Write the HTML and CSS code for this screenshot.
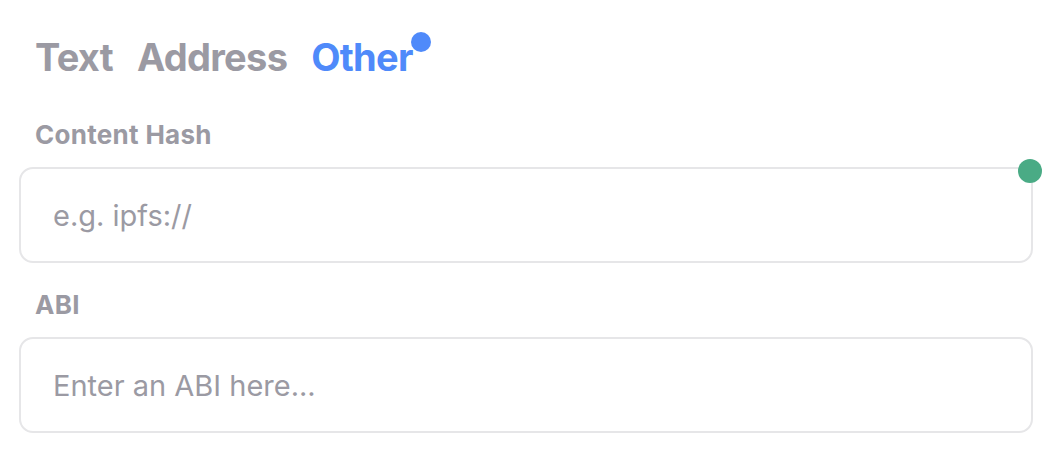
FILE: index.html
```html
<!DOCTYPE html>
<html lang="en">
<head>
    <meta charset="UTF-8">
    <title>Records</title>
    <link rel="stylesheet" href="styles.css">
</head>
<body>
    <div class="panel">
        <div class="tabs">
            <span class="tab">Text</span>
            <span class="tab">Address</span>
            <span class="tab tab-active">Other<span class="tab-dot"></span></span>
        </div>
        <div class="field">
            <label class="field-label">Content Hash</label>
            <div class="input-wrap">
                <input class="input" type="text" placeholder="e.g. ipfs://">
                <span class="status-dot"></span>
            </div>
        </div>
        <div class="field">
            <label class="field-label">ABI</label>
            <div class="input-wrap">
                <input class="input" type="text" placeholder="Enter an ABI here...">
            </div>
        </div>
    </div>
</body>
</html>
```

FILE: styles.css
```css
body {
    margin: 0;
    background: #ffffff;
    font-family: Inter, "Noto Sans", sans-serif;
}
.panel {
    padding: 30px 23px 0 19px;
}
.tabs {
    display: flex;
    gap: 24px;
    padding-left: 16px;
    margin-bottom: 35px;
}
.tab {
    font-size: 38px;
    font-weight: 700;
    color: #9b9aa3;
    line-height: 54px;
    letter-spacing: -0.7px;
}
.tab-active {
    color: #4f8afa;
    position: relative;
}
.tab-dot {
    position: absolute;
    top: 2px;
    right: -18px;
    width: 20px;
    height: 20px;
    border-radius: 50%;
    background: #4f8afa;
}
.field {
    display: flex;
    flex-direction: column;
    margin-bottom: 26px;
}
.field-label {
    font-size: 26px;
    font-weight: 700;
    color: #9b9aa3;
    padding-left: 16px;
    line-height: 32px;
    letter-spacing: 0.3px;
    margin-bottom: 16px;
}
.input-wrap {
    position: relative;
}
.input {
    box-sizing: border-box;
    width: 100%;
    height: 96px;
    border: 2px solid #e6e6e8;
    border-radius: 14px;
    padding: 0 32px;
    font-family: inherit;
    font-size: 29px;
    color: #333;
    outline: none;
}
.input::placeholder {
    color: #9b9aa3;
}
.status-dot {
    position: absolute;
    top: -8px;
    right: -9px;
    width: 24px;
    height: 24px;
    border-radius: 50%;
    background: #4aab85;
}
```
